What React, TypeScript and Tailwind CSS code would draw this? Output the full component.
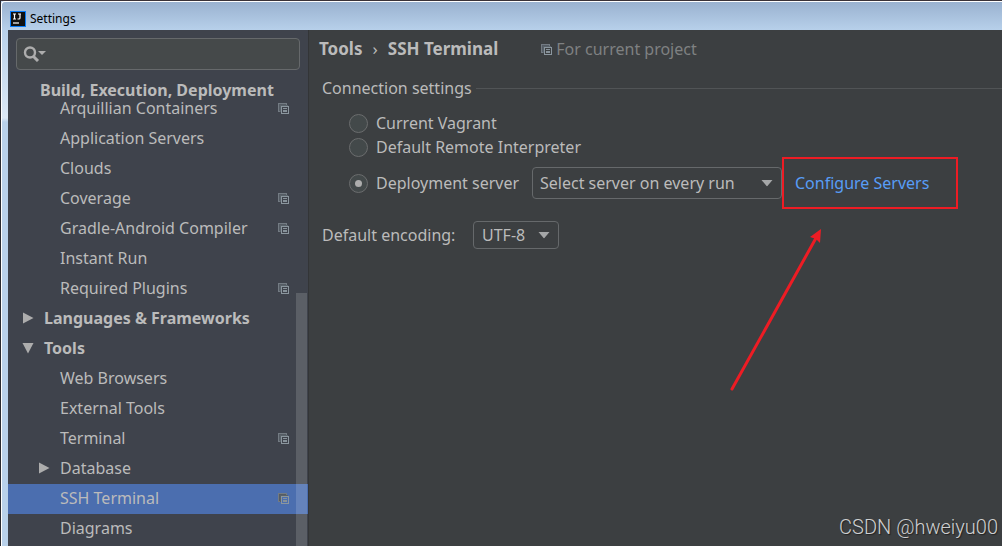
import React from "react";

type Item = {
  label: string;
  level: 0 | 1;
  bold?: boolean;
  arrow?: "right" | "down";
  project?: boolean;
  selected?: boolean;
  short?: boolean;
};

const ITEMS: Item[] = [
  { label: "Arquillian Containers", level: 1, project: true, short: true },
  { label: "Application Servers", level: 1 },
  { label: "Clouds", level: 1 },
  { label: "Coverage", level: 1, project: true },
  { label: "Gradle-Android Compiler", level: 1, project: true },
  { label: "Instant Run", level: 1 },
  { label: "Required Plugins", level: 1, project: true },
  { label: "Languages & Frameworks", level: 0, bold: true, arrow: "right" },
  { label: "Tools", level: 0, bold: true, arrow: "down" },
  { label: "Web Browsers", level: 1 },
  { label: "External Tools", level: 1 },
  { label: "Terminal", level: 1, project: true },
  { label: "Database", level: 1, arrow: "right" },
  { label: "SSH Terminal", level: 1, project: true, selected: true },
  { label: "Diagrams", level: 1 },
];

function ProjectIcon() {
  return (
    <svg className="h-[11px] w-[11px] shrink-0" viewBox="0 0 11 11" shapeRendering="crispEdges" aria-hidden="true">
      <path d="M0 0h9v2H8V1H1v7h1v1H0z" fill="#737b83" />
      <path d="M1 1h7v1H2v6H1z" fill="#555c64" />
      <path d="M3 3h8v8H3zM4 4v6h6V4z" fillRule="evenodd" fill="#8b969e" />
      <path d="M2 2h1v7H2zM2 2h8v1H2z" fill="#59626a" />
      <path d="M5 5h4v1H5zM5 7h4v2H5z" fill="#87929a" />
    </svg>
  );
}

function Arrow({ dir }: { dir: "right" | "down" }) {
  return (
    <svg className="h-3 w-3 shrink-0" viewBox="0 0 12 12" aria-hidden="true">
      <path d={dir === "right" ? "M1 0.500L11.500 6L1 11.500z" : "M0.500 1H11.500L6 11.500z"} fill="#adadad" />
    </svg>
  );
}

function TreeRow({ item }: { item: Item }) {
  return (
    <li
      className={`flex shrink-0 items-end pr-5 pb-[8px] leading-4 ${item.short ? "h-6" : "h-[30px]"} ${
        item.level === 0 ? "pl-[14px]" : "pl-[30px]"
      } ${item.selected ? "bg-[#4b6eaf]" : ""}`}
    >
      <span className="flex h-4 w-[22px] shrink-0 items-center">{item.arrow && <Arrow dir={item.arrow} />}</span>
      <span className={`flex-1 whitespace-nowrap ${item.bold ? "font-bold" : ""}`}>{item.label}</span>
      {item.project && (
        <span className="flex h-4 items-center">
          <ProjectIcon />
        </span>
      )}
    </li>
  );
}

function Dropdown({ id, label, value, className }: { id: string; label: string; value: string; className: string }) {
  return (
    <span className="relative flex">
      <select
        id={id}
        aria-label={label}
        className={`appearance-none rounded-[4px] border border-[#66696b] bg-[#3c3f41] text-[#bbbbbb] outline-none ${className}`}
      >
        <option>{value}</option>
      </select>
      <svg
        className="pointer-events-none absolute top-1/2 right-[9px] h-[7px] w-3 -translate-y-1/2"
        viewBox="0 0 12 7"
        aria-hidden="true"
      >
        <path d="M0.500 0.500h11L6 7z" fill="#a5a7a8" />
      </svg>
    </span>
  );
}

function Radio({ id, label, checked }: { id: string; label: string; checked?: boolean }) {
  return (
    <span className="flex items-center gap-2">
      <span className="grid place-items-center">
        <input
          id={id}
          type="radio"
          name="connection"
          defaultChecked={checked}
          className="peer col-start-1 row-start-1 h-[19px] w-[19px] appearance-none rounded-full border border-[#6b6d6e] bg-[#43494a]"
        />
        <span className="pointer-events-none col-start-1 row-start-1 hidden h-[7px] w-[7px] rounded-full bg-[#adadad] peer-checked:block" />
      </span>
      <label htmlFor={id} className="whitespace-nowrap">
        {label}
      </label>
    </span>
  );
}

function Sidebar() {
  return (
    <aside className="relative flex w-[301px] shrink-0 flex-col overflow-hidden bg-[#3f434c]">
      <div className="mr-[9px] ml-2 mt-2 flex h-8 shrink-0 items-center rounded-[4px] border border-[#66696b] bg-[#45494a] pl-[6px]">
        <svg className="h-4 w-6 shrink-0" viewBox="0 0 24 16" aria-hidden="true">
          <circle cx="7" cy="6.500" r="5" fill="none" stroke="#adadad" strokeWidth="2.400" />
          <path d="M10.500 10.500l4.500 4.500" stroke="#adadad" strokeWidth="3" />
          <path d="M15 5h8l-4 4z" fill="#adadad" />
        </svg>
        <input type="text" aria-label="Search settings" className="min-w-0 flex-1 bg-transparent px-1 outline-none" />
      </div>
      <div className="flex h-[30px] shrink-0 items-end pb-[2px] pl-8 leading-4 font-bold">
        Build, Execution, Deployment
      </div>
      <ul className="flex flex-col">
        {ITEMS.map((item) => (
          <TreeRow key={item.label} item={item} />
        ))}
      </ul>
      <div className="absolute right-[2px] bottom-0 h-[253px] w-[11px] bg-white/15" />
      <div className="absolute inset-y-0 right-0 w-px bg-[#333537]" />
    </aside>
  );
}

export default function App() {
  return (
    <div className="flex h-screen flex-col overflow-hidden border-t border-l border-t-[#3a3238] border-l-[#2a2a30] bg-[#b9d1ea] font-['Noto_Sans','Open_Sans',sans-serif] text-[16px] text-[#bbbbbb]">
      <header className="flex h-[29px] shrink-0 items-center gap-1 rounded-tl-[4px] border-t border-l border-white bg-linear-to-b from-[#9ab2d0] to-[#b7d0ea] pt-[5px] pl-2">
        <svg className="h-4 w-4" viewBox="0 0 16 16" aria-hidden="true">
          <rect width="16" height="16" fill="#087cfa" />
          <rect x="1" y="1" width="14" height="14" fill="#111" />
          <path d="M3 3h3M4.500 3v5M3 8h3M8 3h3M10 3v4q0 1-1 1H7.500" stroke="#fff" strokeWidth="1.200" fill="none" />
          <path d="M3 12h6" stroke="#fff" strokeWidth="1.200" />
        </svg>
        <h1 className="text-[12px] text-black">Settings</h1>
      </header>
      <div className="flex min-h-0 flex-1 border-l border-white bg-[linear-gradient(to_bottom,#b9d1ea_0px,#dce8f5_88px,#b9d1ea_92px)] pl-[6px]">
        <Sidebar />
        <main className="relative flex min-w-0 flex-1 flex-col bg-[#3c3f41]">
          <div className="flex h-[38px] shrink-0 items-center pl-[10px] whitespace-nowrap">
            <h2 className="flex gap-[10px] text-[17px] font-bold">
              <span>Tools</span>
              <span className="font-normal">›</span>
              <span>SSH Terminal</span>
            </h2>
            <div className="ml-[43px] flex items-center gap-1 text-[#7f8182]">
              <ProjectIcon />
              <span>For current project</span>
            </div>
          </div>
          <fieldset className="pl-[13px]">
            <div className="flex h-10 items-center gap-1">
              <span className="whitespace-nowrap">Connection settings</span>
              <span className="h-px flex-1 bg-[#515456]" />
            </div>
            <div className="flex flex-col pt-[3px] pl-[27px]">
              <div className="flex h-6 items-center">
                <Radio id="vagrant" label="Current Vagrant" />
              </div>
              <div className="flex h-6 items-center">
                <Radio id="remote" label="Default Remote Interpreter" />
              </div>
              <div className="flex h-12 items-center">
                <div className="flex w-[183px] shrink-0">
                  <Radio id="deployment" label="Deployment server" checked />
                </div>
                <Dropdown
                  id="server"
                  label="Server"
                  value="Select server on every run"
                  className="h-8 w-[250px] pl-[7px]"
                />
                <div className="flex h-[52px] w-[176px] shrink-0 items-center border-2 border-[#ed1c24] pl-[11px]">
                  <a href="#servers" className="whitespace-nowrap text-[#589df6]">
                    Configure Servers
                  </a>
                </div>
              </div>
            </div>
          </fieldset>
          <div className="flex h-14 items-center pl-[13px]">
            <label htmlFor="encoding" className="w-[151px]">
              Default encoding:
            </label>
            <Dropdown id="encoding" label="Default encoding" value="UTF-8" className="h-7 w-[86px] pl-[8px]" />
          </div>
          <svg
            className="pointer-events-none absolute top-[199px] left-[421px] h-[162px] w-[94px]"
            viewBox="0 0 94 162"
            aria-hidden="true"
          >
            <path d="M2 160L86 9" stroke="#ed1c24" strokeWidth="3" strokeLinecap="round" />
            <path d="M91 0L90 14L86 10L80 8z" fill="#ed1c24" />
          </svg>
          <p className="mt-auto pr-1 pb-[5px] text-right font-['Roboto',sans-serif] text-[20px] leading-7 font-light text-[#cfd0d1] [text-shadow:1px_1px_1px_#222]">
            CSDN @hweiyu00
          </p>
        </main>
      </div>
    </div>
  );
}
